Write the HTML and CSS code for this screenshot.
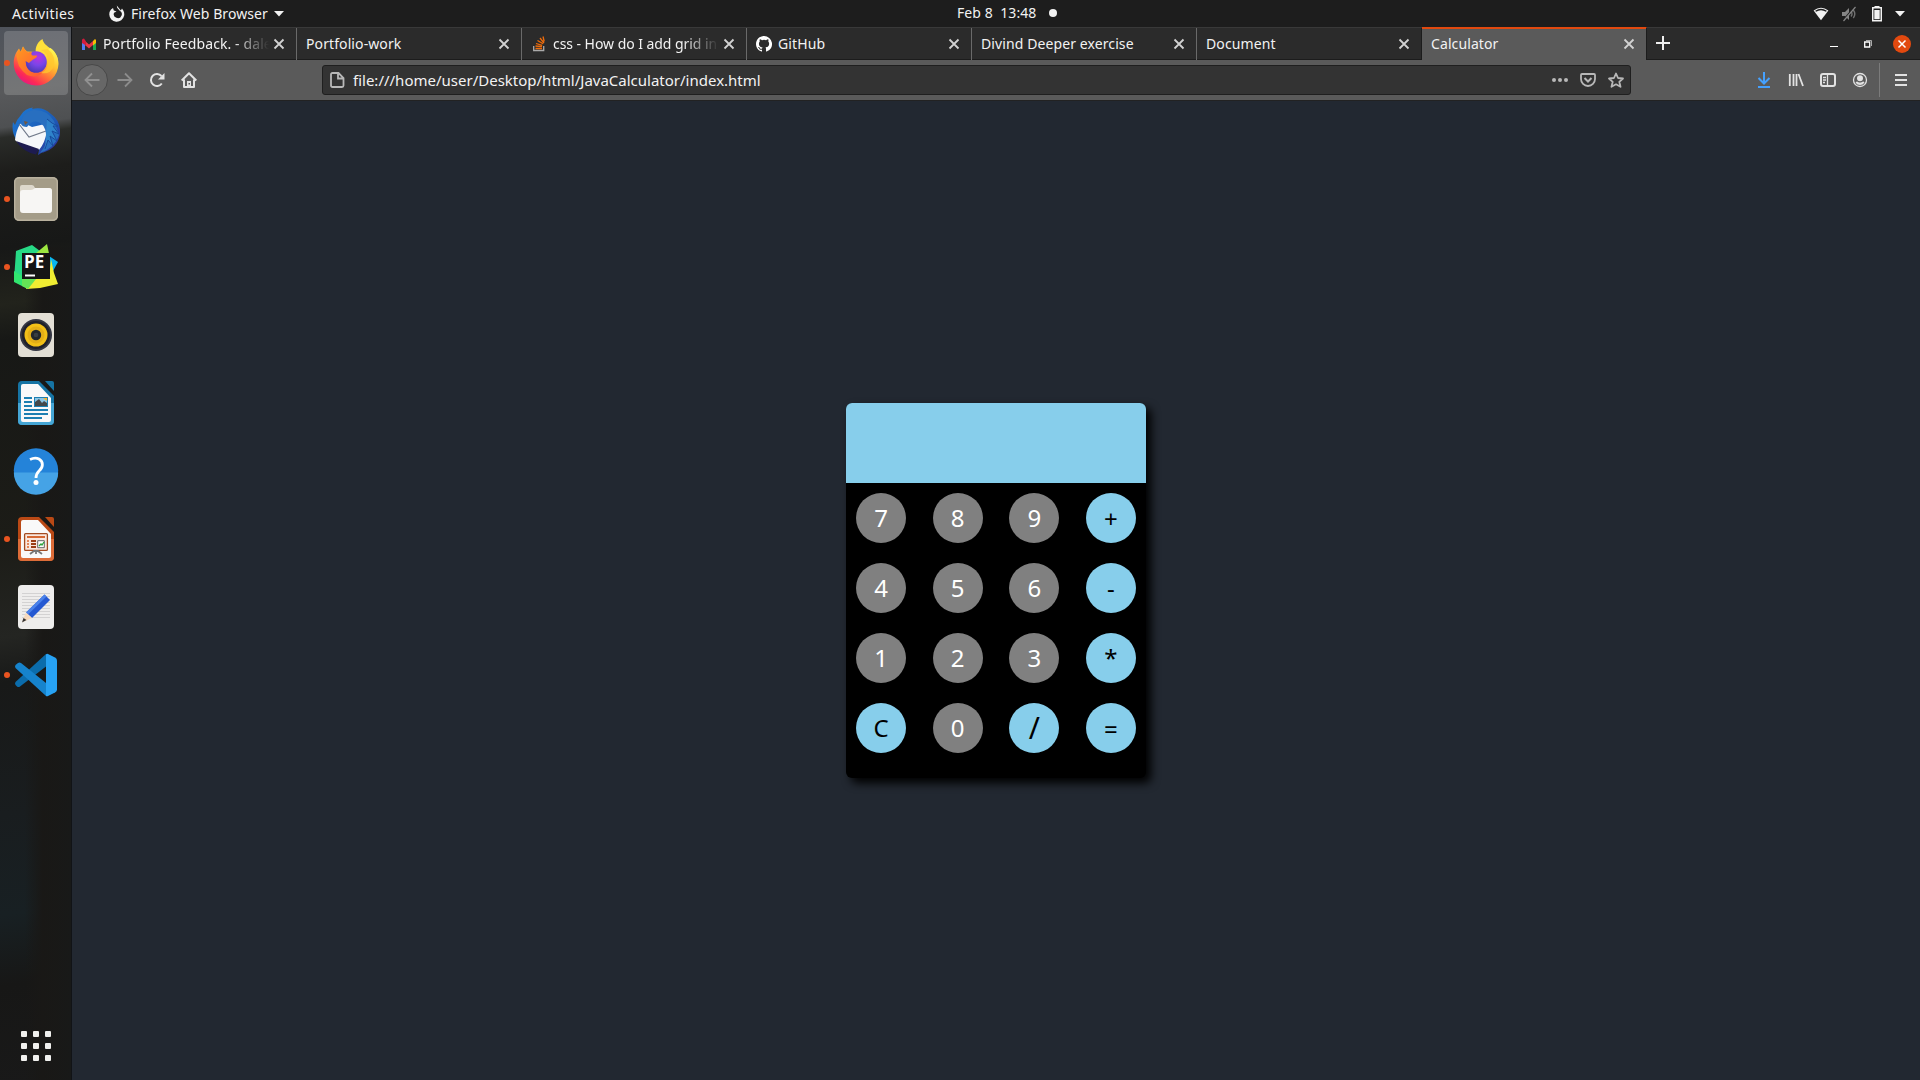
FILE: index.html
```html
<!DOCTYPE html>
<html lang="en">
<head>
<meta charset="utf-8">
<title>Calculator</title>
<link rel="stylesheet" href="styles.css">
</head>
<body>
<header class="panel">
  <div class="panel-left">
    <span class="activities">Activities</span>
    <svg class="app-mark" width="18" height="18" viewBox="0 0 18 18"><path d="M8.800.5 9.200 2.800 11.500 5.500A4 4 0 1 1 6 7.800L8.500 6.500 5.800 5.500 5 3 3 4.500A7.500 7.500 0 1 0 15.300 5.600L14 3.400 12.800 5.500Z" fill="#f2f2f2"/></svg>
    <span class="app-name">Firefox Web Browser</span>
    <svg width="10" height="6" viewBox="0 0 10 6"><path d="M0 0h10L5 5.500z" fill="#f2f2f2"/></svg>
  </div>
  <div class="panel-clock"><span class="clock">Feb 8&nbsp; 13:48</span><i class="notice"></i></div>
  <div class="panel-status">
    <svg width="16" height="16" viewBox="0 0 16 16"><path d="M.6 4.600Q8-1.300 15.400 4.600L8 14.200Z" fill="#f2f2f2"/><path d="M2.200 4.700Q8 .8 13.800 4.700L13 5.800Q8 2.600 3 5.800Z" fill="#1d1d1d"/></svg>
    <svg width="16" height="16" viewBox="0 0 16 16"><path d="M1 6h3l4-4v12l-4-4H1z" fill="#858585"/><path d="M10 5.500q2 2.500 0 5M12.300 4q3 4 0 8" stroke="#707070" stroke-width="1.400" fill="none"/><path d="M13.500 1 1.500 15" stroke="#1d1d1d" stroke-width="1.500"/><path d="M14.500 1 2.500 15" stroke="#858585" stroke-width="1.200"/></svg>
    <svg width="16" height="16" viewBox="0 0 16 16"><path d="M5.500 0h5v1.500h-5z" fill="#f2f2f2"/><path d="M3.750 1.750h8.500v13h-8.500z" fill="none" stroke="#f2f2f2" stroke-width="1.500"/><path d="M5.300 4h5.400v9.200H5.300z" fill="#f2f2f2"/></svg>
    <svg class="caret" width="10" height="6" viewBox="0 0 10 6"><path d="M0 0h10L5 5.500z" fill="#f2f2f2"/></svg>
  </div>
</header>
<div class="workspace">
  <nav class="dock">
    <div class="launcher focused running">
      <svg width="48" height="48" viewBox="0 0 48 48">
        <defs>
          <linearGradient id="ff" x1=".85" y1=".1" x2=".2" y2=".95"><stop offset="0" stop-color="#fff44f"/><stop offset=".3" stop-color="#ffbf2e"/><stop offset=".58" stop-color="#ff7139"/><stop offset=".82" stop-color="#fc2a55"/><stop offset="1" stop-color="#e31587"/></linearGradient>
          <radialGradient id="globe" cx=".6" cy=".3" r=".7"><stop offset="0" stop-color="#b833e1"/><stop offset=".5" stop-color="#7b45e8"/><stop offset="1" stop-color="#4c39b5"/></radialGradient>
          <linearGradient id="fox" x1="0" y1="0" x2="1" y2="1"><stop offset="0" stop-color="#ff9a1f"/><stop offset="1" stop-color="#ff5634"/></linearGradient>
        </defs>
        <path d="M30.500 0C24 4 23 10 24 15L40 36 45.600 28C47.500 20 44 14 39 10 35 7 31 4 30.500 0Z" fill="#ffe03a"/>
        <path d="M38.500 9C44 13 46.500 19 46.500 25A22.300 22 0 0 1 24 46.500 22.300 22 0 0 1 1.700 24C1.700 18 4 13 7 9.500L8.500 13 11 7.500Q12 10 15 12.500L24 13Q37 10 38.500 9Z" fill="url(#ff)"/>
        <circle cx="24" cy="23" r="10.800" fill="url(#globe)"/>
        <path d="M4.500 17Q6 11 7.500 10.500L9 13 11 7.500Q12.500 11 16 13.500 18 12.500 20 13 18.500 15 20.500 16.500H25Q25.500 18.500 21 20.500 18 22.500 17 24L13.500 22Q14 32 22 34 26 35 31 33 25 40 15 36 10 32 7 27 5 21 4.500 17Z" fill="url(#fox)"/>
        <path d="M29 11Q36 14 36 23 36 31 29 34 38 36 42 27 44 17 36 10Z" fill="#ffc72e" opacity=".75"/>
      </svg>
    </div>
    <div class="launcher">
      <svg width="48" height="48" viewBox="0 0 48 48">
        <defs><linearGradient id="bird" x1="0" y1="0" x2="1" y2="1"><stop offset="0" stop-color="#1d7bd6"/><stop offset=".55" stop-color="#1c5cb8"/><stop offset="1" stop-color="#352a93"/></linearGradient></defs>
        <path d="M9 8Q13 1 21 .5L20 2Q31-1 39 7 49 14 48 27 46 41 30 46L31 45 26 48 27 43 5 34Q-1 25 1 15L3 18Q5 12 9 8Z" fill="url(#bird)"/>
        <path d="M3 33Q4 24 8 17L12 16 20 20 33 17 35 24Q33 36 27 43L5 35Z" fill="#f5f7fa"/>
        <path d="M7 17 17 30 34 24" fill="none" stroke="#70798a" stroke-width="1.200"/>
        <path d="M4 34 27 42 24 47.500Q11 45 4 34Z" fill="#1d1b50"/>
        <path d="M9 17Q10 5 21 3 35 2 42 14L47 28Q43 41 28 46 37 35 34 27 33 17 26 15 20 13 15 20 10 20 9 17Z" fill="#286fc0"/>
        <path d="M35 12Q40 17 46 19L41 19 47 27 40 24 45 34 38 29 41 39 36 33 33 42" stroke="#174a9c" fill="#2e83cb"/>
        <path d="m12 14 4 1-3 3z" fill="#76573b"/>
      </svg>
    </div>
    <div class="launcher running">
      <svg width="48" height="48" viewBox="0 0 48 48"><rect x="2" y="2" width="44" height="44" rx="5" fill="#a49c88"/><rect x="2.700" y="2.700" width="42.600" height="42.600" rx="4.500" fill="none" stroke="#b9b19e" stroke-width="1.400"/><path d="M8 14V12q0-2 2-2h10q2 0 3 3h14q3 0 3 3v4H8z" fill="#ddd8cc"/><path d="M8 18q0-3 3-3h8q2 0 4-2h14q3 0 3 3v19q0 3-3 3H11q-3 0-3-3z" fill="#f7f6f4"/></svg>
    </div>
    <div class="launcher running">
      <svg width="48" height="48" viewBox="0 0 48 48"><path d="M4 8 20 2l12 9-5 29-11 6-6-5-8-4z" fill="#27da86"/><path d="m23 11 12-10 3 14z" fill="#9de640"/><path d="m37 13 9 6-5 9-8-6z" fill="#07b6f0"/><path d="m2 28 13 8-1 9-12-6z" fill="#31e66f"/><path d="m39 16 3 14 4 11-18 4-14 1 4-12 20-8z" fill="#f0ed32"/><path d="M10 36h14l-8 10-6-3z" fill="#65e456"/><path d="M10 10h28v26H10z" fill="#151515"/><path d="M13 31.500h10v2H13z" fill="#fff"/><text class="pe" x="12" y="24.500">PE</text></svg>
    </div>
    <div class="launcher">
      <svg width="48" height="48" viewBox="0 0 48 48"><rect x="6" y="2" width="36" height="44" rx="4" fill="#e3dfd5"/><circle cx="24" cy="24" r="16" fill="#343642"/><circle cx="24" cy="24" r="14" fill="#20212a"/><circle cx="24" cy="24" r="11.500" fill="#f2c018"/><circle cx="24" cy="24" r="8.500" fill="#e3ae17"/><circle cx="24" cy="24" r="5.200" fill="#22262b"/><circle cx="24" cy="24" r="2.300" fill="#393d41"/></svg>
    </div>
    <div class="launcher">
      <svg width="48" height="48" viewBox="0 0 48 48"><path d="M10 2h17l15 15v25q0 4-4 4H10q-4 0-4-4V6q0-4 4-4z" fill="#1674a4"/><path d="M6 24h36v18q0 4-4 4H10q-4 0-4-4z" fill="#45a6d5"/><path d="M33 2h7q2 0 2 2v8z" fill="#1674a4"/><path d="M11 5h15l13 14v22q0 2-2 2H11q-2 0-2-2V7q0-2 2-2z" fill="#f9f9f9"/><path d="M12 19h8M12 23h8M12 27h8M12 31h24M12 35h24M12 39h18" stroke="#1c7fb2" stroke-width="2"/><path d="M22 18h14v10H22z" fill="#1c7fb2"/><path d="M23 19h12v8H23z" fill="#8ac5e4"/><path d="m23 27 0-4 4-3 3 4 2-2 3 2v3z" fill="#44484a"/><path d="M31 19h4v3z" fill="#f7b52d"/></svg>
    </div>
    <div class="launcher">
      <svg width="48" height="48" viewBox="0 0 48 48"><circle cx="24" cy="23.500" r="22.200" fill="#2483d9"/><path d="M1.800 25.500h44.400a22.200 22.200 0 0 1-44.400 0z" fill="#45a3e6"/><path d="M18 12.500Q23 10 27 12C32 15 31 20.500 27 24 24.500 26.500 24 28 24 31" fill="none" stroke="#fff" stroke-width="2.800"/><circle cx="24" cy="35.500" r="2.500" fill="#fff"/></svg>
    </div>
    <div class="launcher running">
      <svg width="48" height="48" viewBox="0 0 48 48"><path d="M10 2h17l15 15v25q0 4-4 4H10q-4 0-4-4V6q0-4 4-4z" fill="#ba4915"/><path d="M6 24h36v18q0 4-4 4H10q-4 0-4-4z" fill="#dd6c38"/><path d="M33 2h7q2 0 2 2v8z" fill="#ba4915"/><path d="M11 5h15l13 14v22q0 2-2 2H11q-2 0-2-2V7q0-2 2-2z" fill="#f9f9f9"/><rect x="12.600" y="18.600" width="22.800" height="16.800" rx="1" fill="#fae8df" stroke="#a34b21" stroke-width="1.300"/><path d="M15 22h18" stroke="#d56934" stroke-width="2"/><path d="M15 26h2m-2 3h2m-2 3h2" stroke="#e48656" stroke-width="2"/><path d="M19 26h5m-5 3h5m-5 3h5" stroke="#9b3f16" stroke-width="2"/><path d="M25.700 25.700h6.600v7h-6.600z" fill="#fff" stroke="#666"/><path d="m27 31 2-2 1 1 2-3" stroke="#2ca33a" stroke-width="1.300" fill="none"/><path d="m18 39 4-3h4l4 3m-6-3v3" stroke="#777" stroke-width="1.800" fill="none"/></svg>
    </div>
    <div class="launcher">
      <svg width="48" height="48" viewBox="0 0 48 48"><rect x="6" y="2" width="36" height="44" rx="4" fill="#eeedec"/><path d="M10 10.500h28m-28 3h28m-28 3h28m-28 3h28m-28 3h28m-28 3h28m-28 3h28m-28 3h28m-28 3h28" stroke="#d3d2d2"/><path d="m14 29.500 18.500-18 5.500 5.500-18 18z" fill="#2458d2"/><path d="m14 29.500 18.500-18 2 2-18.500 18z" fill="#4a82ea"/><path d="m14 29.500 6 5.500-9 4-.5-1.500z" fill="#f6d9bd"/><path d="m11.500 35 3 2-4.500 2.500z" fill="#333"/></svg>
    </div>
    <div class="launcher running">
      <svg width="48" height="48" viewBox="0 0 48 48"><path d="M34 3v12.500L8 35.500q-1.500 1-3 0L3.500 34q-1-1.500 0-3z" fill="#0b6cab"/><path d="M3.500 14 6 12q1.500-.8 3 0L34 32v13L3.500 17q-1-1.500 0-3z" fill="#1683cc"/><path d="M34 3.200q1-.6 2-.2l7 3.500q2 1 2 3v29q0 2-2 3L36 45q-1 .5-2 0z" fill="#27a2f3"/></svg>
    </div>
    <div class="show-apps"><i></i><i></i><i></i><i></i><i></i><i></i><i></i><i></i><i></i></div>
  </nav>
  <section class="browser">
    <svg class="symbols" width="0" height="0"><symbol id="x" viewBox="0 0 20 20"><path d="m5.500 5.500 9 9m0-9-9 9" fill="none" stroke="#d2d2d2" stroke-width="1.800"/></symbol></svg>
    <div class="tabs">
      <div class="tab"><svg class="favicon" width="16" height="16" viewBox="0 0 16 16"><path d="M1 5v9h3V8z" fill="#4f7bf0"/><path d="M12 8v6h3V5z" fill="#20a851"/><path d="M4 5 8 8.500 12 5v4L8 12.500 4 9z" fill="#ea3545"/><path d="M1 4q0-1.500 2-1.500l2 3v4L1 7z" fill="#d31b3c"/><path d="m12 5 2-2 1 1v3l-3 2.500z" fill="#fbbc04"/></svg><span class="title fade">Portfolio Feedback. - dale</span><svg class="close" width="20" height="20"><use href="#x"/></svg></div>
      <div class="tab"><span class="title">Portfolio-work</span><svg class="close" width="20" height="20"><use href="#x"/></svg></div>
      <div class="tab"><svg class="favicon" width="16" height="16" viewBox="0 0 16 16"><path d="M2.700 10v4.500h10V10" fill="none" stroke="#aaa" stroke-width="1.300"/><path d="M4.500 12.500h6.500M4.500 10l6.500.7M5 7.500l6.200 1.800M6.500 4.500l5.500 3.300M9 2l4 5M12 .5l1.200 5" fill="none" stroke="#ef6c0b" stroke-width="1.300"/></svg><span class="title fade css-question">css - How do I add grid in</span><svg class="close" width="20" height="20"><use href="#x"/></svg></div>
      <div class="tab"><svg class="favicon" width="16" height="16" viewBox="0 0 16 16"><path d="M8 0C3.580 0 0 3.580 0 8c0 3.540 2.290 6.530 5.470 7.590.4.070.55-.17.55-.38v-1.490c-2.010.37-2.530-.49-2.690-.94-.09-.23-.48-.94-.82-1.130-.28-.15-.68-.52-.01-.53.63-.01 1.080.58 1.230.82.72 1.210 1.870.87 2.330.66.07-.52.28-.87.51-1.070-1.780-.2-3.640-.89-3.640-3.950 0-.87.310-1.590.82-2.150-.08-.2-.36-1.020.08-2.120 0 0 .67-.21 2.200.82a7.600 7.600 0 0 1 4 0c1.530-1.040 2.200-.82 2.200-.82.44 1.100.16 1.920.08 2.120.51.56.82 1.270.82 2.150 0 3.070-1.870 3.750-3.650 3.950.29.250.54.730.54 1.480v2.200c0 .21.150.46.550.38A8 8 0 0 0 8 0Z" fill="#fff"/></svg><span class="title">GitHub</span><svg class="close" width="20" height="20"><use href="#x"/></svg></div>
      <div class="tab"><span class="title">Divind Deeper exercise</span><svg class="close" width="20" height="20"><use href="#x"/></svg></div>
      <div class="tab before-active"><span class="title">Document</span><svg class="close" width="20" height="20"><use href="#x"/></svg></div>
      <div class="tab active"><span class="title">Calculator</span><svg class="close" width="20" height="20"><use href="#x"/></svg></div>
      <svg class="new-tab" width="16" height="16" viewBox="0 0 16 16"><path d="M8 1v14M1 8h14" stroke="#eee" stroke-width="2"/></svg>
      <div class="window-buttons">
        <svg width="18" height="18" viewBox="0 0 18 18"><path d="M5 11.500h8" stroke="#fff"/></svg>
        <svg width="18" height="18" viewBox="0 0 18 18"><path d="M5.700 7h5v5h-5z" fill="none" stroke="#fff" stroke-width="1.300"/><path d="M7 5.500h5.500V11" fill="none" stroke="#aaa"/></svg>
        <svg width="18" height="18" viewBox="0 0 18 18"><circle cx="9" cy="9" r="9" fill="#e2490f"/><path d="m5.500 5.500 7 7m0-7-7 7" stroke="#fff" stroke-width="1.500"/></svg>
      </div>
    </div>
    <div class="toolbar">
      <div class="nav-buttons">
        <div class="back"><svg width="16" height="16" viewBox="0 0 16 16"><path d="M15.500 8H1.500M8 1.500 1.500 8 8 14.500" fill="none" stroke="#919191" stroke-width="1.800"/></svg></div>
        <svg width="16" height="16" viewBox="0 0 16 16"><path d="M.5 8h14M8 1.500 14.500 8 8 14.500" fill="none" stroke="#8d8d8d" stroke-width="1.800"/></svg>
        <svg width="16" height="16" viewBox="0 0 16 16"><path d="M12.800 11.500A6 6 0 1 1 12.500 4" fill="none" stroke="#e2e2e2" stroke-width="2"/><path d="M15.500 1v6.500H9z" fill="#e2e2e2"/></svg>
        <svg width="16" height="16" viewBox="0 0 16 16"><path d="M.7 8.500 8 1.200l7.300 7.300M3 7.500v7.500h10V7.500" fill="none" stroke="#e2e2e2" stroke-width="2" stroke-linejoin="round"/><path d="M6 9h4v6H6z" fill="#e2e2e2"/><path d="M7.500 11h1.500v1.500H7.500z" fill="#555"/></svg>
      </div>
      <div class="address">
        <svg width="16" height="16" viewBox="0 0 16 16"><path d="M3.500 1H9.500l5 5v7.500q0 1.500-1.500 1.500H3.500Q2 15 2 13.500v-11Q2 1 3.500 1zM9 1.500v5h5" fill="none" stroke="#b8b8b8" stroke-width="1.800"/></svg>
        <span class="url">file:///home/user/Desktop/html/JavaCalculator/index.html</span>
        <div class="page-actions">
          <svg width="16" height="16" viewBox="0 0 16 16" fill="#b8b8b8"><circle cx="2" cy="8" r="2"/><circle cx="8" cy="8" r="2"/><circle cx="14" cy="8" r="2"/></svg>
          <svg width="16" height="16" viewBox="0 0 16 16" fill="none" stroke="#b8b8b8" stroke-width="1.800"><path d="M2 2h12q1 0 1 1v4a7 7 0 0 1-14 0V3q0-1 1-1z"/><path d="m4.500 6 3.500 3.500L11.500 6" stroke-width="2"/></svg>
          <svg width="16" height="16" viewBox="0 0 16 16"><path d="m8 1.500 2 4.500 5 .5-3.700 3.300 1.200 5L8 12.300l-4.500 2.500 1.200-5L1 6.500 6 6z" fill="none" stroke="#b8b8b8" stroke-width="1.800" stroke-linejoin="round"/></svg>
        </div>
      </div>
      <div class="tools">
        <svg width="16" height="16" viewBox="0 0 16 16"><path d="M8 0v11M2.500 6 8 11.500 13.500 6M2 15h12" fill="none" stroke="#45a1ff" stroke-width="2"/></svg>
        <svg width="16" height="16" viewBox="0 0 16 16"><path d="M1.800 2v12M5.500 2v12M8.500 2v12M10.500 2l4.500 12" fill="none" stroke="#e2e2e2" stroke-width="1.800"/></svg>
        <svg width="16" height="16" viewBox="0 0 16 16"><rect x="1" y="2" width="14" height="12" rx="2" fill="none" stroke="#e2e2e2" stroke-width="2"/><path d="M7.500 2v12M3 5.500h3M3 8h3M3 10.500h2" stroke="#e2e2e2" stroke-width="1.300"/></svg>
        <svg width="16" height="16" viewBox="0 0 16 16"><circle cx="8" cy="8" r="6.500" fill="none" stroke="#e2e2e2" stroke-width="1.300"/><circle cx="8" cy="6.300" r="3" fill="#e2e2e2"/><path d="M3.500 10.500Q5 9 6 10q2 1 4 0 1.500-1 2.500.5Q11 13 8 13t-4.500-2.500z" fill="#e2e2e2"/></svg>
        <i class="divider"></i>
        <svg width="16" height="16" viewBox="0 0 16 16"><path d="M2 3h12M2 8h12M2 13h12" stroke="#e2e2e2" stroke-width="2"/></svg>
      </div>
    </div>
    <main class="page">
      <div class="calculator">
        <div class="display"></div>
        <div class="keys">
          <b class="key">7</b><b class="key">8</b><b class="key">9</b><b class="key op low">+</b>
          <b class="key">4</b><b class="key">5</b><b class="key">6</b><b class="key op">-</b>
          <b class="key">1</b><b class="key">2</b><b class="key">3</b><b class="key op">*</b>
          <b class="key op">C</b><b class="key">0</b><b class="key op slash">/</b><b class="key op low">=</b>
        </div>
      </div>
    </main>
  </section>
</div>
</body>
</html>
```
FILE: styles.css
```css
* { box-sizing: border-box; }
body { margin: 0; width: 1920px; height: 1080px; overflow: hidden; display: flex; flex-direction: column; font: 14px/20px "Noto Sans", "Open Sans", sans-serif; color: #f2f2f2; background: #1d1d1d; }
svg { display: block; flex: none; }
span { white-space: nowrap; }

.panel { height: 27px; flex: none; display: grid; grid-template-columns: 957px 1fr auto; align-items: center; background: #1d1d1d; }
.panel-left { display: flex; align-items: center; padding-left: 12px; }
.activities { width: 96px; letter-spacing: .4px; }
.app-name { width: 143px; margin-left: 5px; letter-spacing: .08px; }
.panel-clock { display: flex; align-items: center; padding-bottom: 1px; }
.clock { width: 92px; letter-spacing: .08px; }
.notice { width: 8px; height: 8px; border-radius: 50%; background: #f2f2f2; }
.panel-status { display: flex; align-items: center; gap: 12px; padding-right: 15px; }
.caret { margin-left: -2px; }

.workspace { flex: 1; display: flex; min-height: 0; }
.dock { width: 72px; display: flex; flex-direction: column; gap: 4px; padding: 4px 3px 0 4px; border-right: 1px solid #111316;
  background: linear-gradient(90deg, transparent 35%, #191816 60%, #181918 100%) 0 220px / 100% 900px no-repeat,
    linear-gradient(172deg, #4f535b 0, #58595b 65px, #4e5052 100px, #2a2c29 110px, #1d1d1b 145px, #171817 220px, #22231c 275px, #171816 310px, #1c1c17 510px, #242522 605px, #181918 650px, #191d1f 780px, #182023 880px, #171716 950px, #191919 100%); }
.launcher { height: 64px; display: flex; align-items: center; justify-content: center; position: relative; border-radius: 4px; flex: none; }
.focused { background: rgba(255, 255, 255, .17); }
.running::before { content: ""; position: absolute; left: 0; top: 29px; width: 6px; height: 6px; border-radius: 50%; background: #e95420; }
.pe { font: bold 17px "Open Sans", sans-serif; fill: #fff; }
.show-apps { margin: auto 0 19px 17px; display: grid; grid-template-columns: repeat(3, 6px); gap: 6px; }
.show-apps i { height: 6px; border-radius: 1px; background: #f0f0ee; }

.browser { flex: 1; display: flex; flex-direction: column; min-width: 0; }
.symbols { position: absolute; }
.tabs { height: 33px; flex: none; display: flex; align-items: stretch; background: #2b2b2b; border-top: 1px solid #393939; box-shadow: inset 0 -1px #1c1c1c; }
.tab { width: 225px; display: flex; align-items: center; padding: 0 7px 0 9px; border-right: 1px solid #6a6a6a; }
.before-active { border-color: #1c1c1c; }
.tab.active { background: #5a5a5a; border-right-color: #1c1c1c; box-shadow: inset 0 1px #e2490f; border-top: 1px solid #e2490f; margin-top: -1px; }
.favicon { margin-right: 6px; }
.title { flex: 1; min-width: 0; letter-spacing: .1px; }
.css-question { letter-spacing: -.05px; }
.fade { -webkit-mask-image: linear-gradient(90deg, #000 calc(100% - 36px), transparent); mask-image: linear-gradient(90deg, #000 calc(100% - 36px), transparent); }
.new-tab { margin: 7px 0 0 8px; }
.window-buttons { margin-left: auto; display: flex; align-items: center; gap: 16px; padding-right: 9px; }

.toolbar { height: 41px; flex: none; display: flex; align-items: center; background: #5a5a5a; border-bottom: 1px solid #222; }
.nav-buttons { width: 250px; display: flex; align-items: center; gap: 16px; padding-left: 4px; }
.back { width: 32px; height: 32px; margin-right: -7px; display: grid; place-items: center; border-radius: 50%; background: #676767; border: 1px solid #484848; }
.address { width: 1309px; height: 30px; display: flex; align-items: center; background: #333; border: 1px solid #1f1f1f; border-radius: 3px; padding: 0 6px; }
.url { margin-left: 8px; font-size: 15px; }
.page-actions { margin-left: auto; display: flex; gap: 12px; }
.tools { margin-left: auto; display: flex; align-items: center; gap: 16px; padding-right: 11px; }
.divider { width: 1px; height: 34px; margin: 0 -3px 0 -5px; background: #7b7b7b; }

.page { flex: 1; display: grid; place-items: center; background: #222831; }
.calculator { width: 300px; height: 375px; border-radius: 6px; background: #000; box-shadow: 5px 5px 10px #000; }
.display { height: 80px; border-radius: 6px 6px 0 0; background: #87ceeb; }
.keys { display: grid; grid-template-columns: repeat(4, 50px); justify-content: space-between; row-gap: 20px; padding: 10px; }
.key { height: 50px; border-radius: 50%; background: #808080; color: #fff; font-size: 24px; font-weight: 400; line-height: 50px; text-align: center; }
.op { background: #87ceeb; color: #000; }
.low { line-height: 52px; }
.slash { font-size: 30px; }
```
